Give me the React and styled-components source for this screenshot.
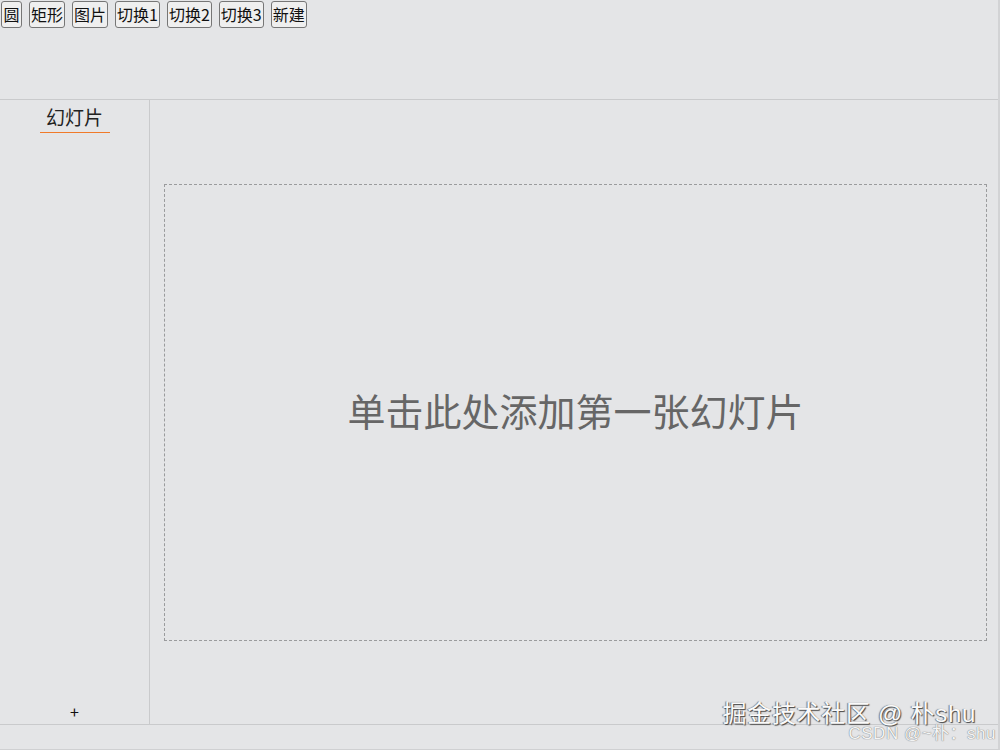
import React from 'react';
import styled, { createGlobalStyle } from 'styled-components';

const GlobalStyle = createGlobalStyle`
  html, body {
    margin: 0;
    padding: 0;
    background: #e4e5e7;
    font-family: "Noto Sans CJK SC", "Noto Sans", sans-serif;
  }
`;

const Page = styled.div`
  position: relative;
  width: 1000px;
  height: 750px;
  box-sizing: border-box;
  border-right: 2px solid #d2d3d5;
  border-bottom: 1px solid #cfd0d2;
  display: grid;
  grid-template-rows: 100px 1fr 25px;
  background: #e4e5e7;
  overflow: hidden;
`;

const Toolbar = styled.div`
  border-bottom: 1px solid #c9cacc;
  display: flex;
  align-items: flex-start;
  gap: 7px;
  padding: 1px 0 0 1px;
`;

const ToolButton = styled.button`
  font-family: "Noto Sans CJK SC", sans-serif;
  font-size: 16px;
  line-height: 21px;
  height: 27px;
  min-width: 21px;
  padding: 0 1px;
  color: #111;
  background: #efefef;
  border: 1px solid #767676;
  border-radius: 3px;
  cursor: pointer;
`;

const Body = styled.div`
  display: grid;
  grid-template-columns: 150px 1fr;
  min-height: 0;
`;

const Sidebar = styled.div`
  border-right: 1px solid #c9cacc;
  display: flex;
  flex-direction: column;
  align-items: center;
  padding-top: 4px;
`;

const SideTitle = styled.div`
  font-size: 19px;
  line-height: 25px;
  color: #222;
  width: 70px;
  text-align: center;
  padding-bottom: 3px;
  border-bottom: 1px solid #f07a2a;
`;

const AddButton = styled.div`
  margin-top: auto;
  font-size: 16px;
  line-height: 16px;
  color: #111;
  padding-bottom: 5px;
`;

const Stage = styled.div`
  display: flex;
  align-items: center;
  justify-content: center;
  padding-left: 3px;
`;

const SlideBox = styled.div`
  width: 823px;
  height: 457px;
  box-sizing: border-box;
  border: 1px dashed #9a9b9d;
  display: flex;
  align-items: center;
  justify-content: center;
  padding-bottom: 6px;
  font-size: 38px;
  color: #666;
`;

const Footer = styled.div`
  border-top: 1px solid #c9cacc;
`;

const Watermark = styled.div`
  position: absolute;
  right: ${p => p.right}px;
  bottom: ${p => p.bottom}px;
  font-size: ${p => p.size}px;
  letter-spacing: ${p => p.spacing || 0}px;
  color: ${p => p.color};
  text-shadow: ${p => p.shadow};
  font-family: "Liberation Sans", "Noto Sans CJK SC", sans-serif;
  white-space: nowrap;
  line-height: 1;
`;

const buttons = ['圆', '矩形', '图片', '切换1', '切换2', '切换3', '新建'];

export default function App() {
  return (
    <>
      <GlobalStyle />
      <Page>
        <Toolbar>
          {buttons.map(b => (
            <ToolButton key={b}>{b}</ToolButton>
          ))}
        </Toolbar>
        <Body>
          <Sidebar>
            <SideTitle>幻灯片</SideTitle>
            <AddButton>+</AddButton>
          </Sidebar>
          <Stage>
            <SlideBox>单击此处添加第一张幻灯片</SlideBox>
          </Stage>
        </Body>
        <Footer />
        <Watermark right={22} bottom={23} size={24} spacing={0.7} color="#fafafa"
          shadow="1px 1px 1px #444, -1px 0 1px #777">
          掘金技术社区 @ 朴shu
        </Watermark>
        <Watermark right={2} bottom={7} size={17} spacing={0.5} color="#f4f4f4"
          shadow="0 0 1px #777, 0 0 1px #999">
          CSDN @~朴：shu
        </Watermark>
      </Page>
    </>
  );
}
